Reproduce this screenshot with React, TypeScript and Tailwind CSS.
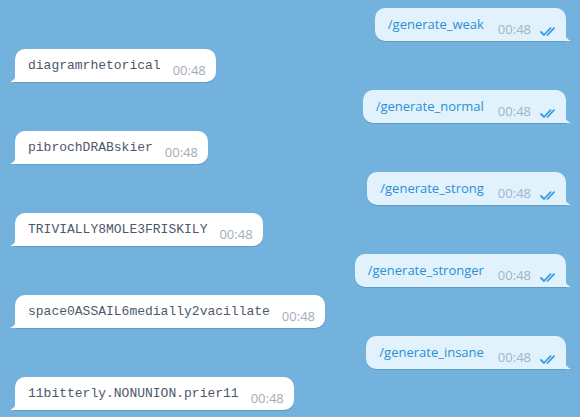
import React from 'react'

type Msg = { out: boolean; text: string }

const messages: Msg[] = [
  { out: true, text: '/generate_weak' },
  { out: false, text: 'diagramrhetorical' },
  { out: true, text: '/generate_normal' },
  { out: false, text: 'pibrochDRABskier' },
  { out: true, text: '/generate_strong' },
  { out: false, text: 'TRIVIALLY8MOLE3FRISKILY' },
  { out: true, text: '/generate_stronger' },
  { out: false, text: 'space0ASSAIL6medially2vacillate' },
  { out: true, text: '/generate_insane' },
  { out: false, text: '11bitterly.NONUNION.prier11' },
]

function DoubleCheck() {
  return (
    <svg width="16" height="9" viewBox="0 0 16 9" fill="none" stroke="#3a9de0" strokeWidth="1.8" strokeLinecap="round" strokeLinejoin="round">
      <path d="M1 5l3 3L10.5 1.2" />
      <path d="M7.5 8l6.5-6.8" />
    </svg>
  )
}

function TailOut() {
  return (
    <svg className="absolute -right-[6px] bottom-0" width="8" height="11" viewBox="0 0 8 11">
      <path d="M0 0 C0.5 6 2.5 9 7 11 L0 11 Z" fill="#e1f2fd" />
    </svg>
  )
}

function TailIn() {
  return (
    <svg className="absolute -left-[6px] bottom-0" width="8" height="11" viewBox="0 0 8 11">
      <path d="M8 0 C7.5 6 5.5 9 1 11 L8 11 Z" fill="#ffffff" />
    </svg>
  )
}

function Bubble({ msg }: { msg: Msg }) {
  if (msg.out) {
    return (
      <div className="flex justify-end pr-[14px]">
        <div className="relative flex items-start bg-[#e1f2fd] rounded-[10px] rounded-br-none pl-[13px] pr-[10px] h-[33px] shadow-[0_1px_0_#5e9bc8]">
          <span className="pt-[7px] text-[13px] leading-[18px] text-[#2a8fd4]" style={{ fontFamily: '"Open Sans", sans-serif' }}>
            {msg.text}
          </span>
          <span className="pt-[14px] ml-[14px] text-[13px] leading-[14px] text-[#9cb5ca]" style={{ fontFamily: '"Open Sans", sans-serif' }}>
            00:48
          </span>
          <span className="pt-[19px] ml-[9px]">
            <DoubleCheck />
          </span>
          <TailOut />
        </div>
      </div>
    )
  }
  return (
    <div className="flex justify-start pl-[15px]">
      <div className="relative flex items-start bg-white rounded-[10px] rounded-bl-none pl-[13px] pr-[10px] h-[33px] shadow-[0_1px_0_#5e9bc8]">
        <span className="pt-[8px] text-[13px] leading-[18px] text-[#4d5968]" style={{ fontFamily: '"Liberation Mono", monospace' }}>
          {msg.text}
        </span>
        <span className="pt-[14px] ml-[12px] text-[13px] leading-[14px] text-[#a3adb8]" style={{ fontFamily: '"Open Sans", sans-serif' }}>
          00:48
        </span>
        <TailIn />
      </div>
    </div>
  )
}

export default function App() {
  return (
    <div className="w-[580px] h-[417px] overflow-hidden bg-[#72b2dd] pt-[8px] flex flex-col gap-[8px]">
      {messages.map((m, i) => (
        <Bubble key={i} msg={m} />
      ))}
    </div>
  )
}
